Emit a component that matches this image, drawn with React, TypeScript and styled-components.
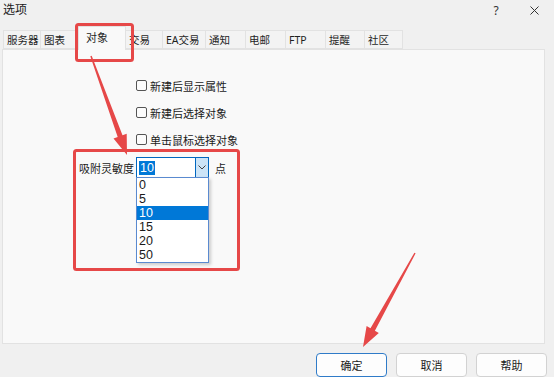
import React from "react";
import styled, { createGlobalStyle } from "styled-components";

const Global = createGlobalStyle`
  html, body { margin: 0; padding: 0; background: #f0f0f0; overflow: hidden; }
  * { box-sizing: border-box; }
`;

const FONT = `"Noto Sans", "Noto Sans CJK SC", sans-serif`;

const Window = styled.div`
  position: relative;
  width: 554px;
  height: 377px;
  background: #f0f0f0;
  font-family: ${FONT};
  color: #1a1a1a;
  display: flex;
  flex-direction: column;
`;

const TitleBar = styled.div`
  height: 20px;
  display: flex;
  align-items: center;
  padding-left: 3px;
  padding-right: 12px;
  font-size: 12px;
`;

const TitleText = styled.span`
  flex: 1;
  line-height: 16px;
`;

const TitleButton = styled.span<{ $w: number; $gap?: number }>`
  width: ${(p) => p.$w}px;
  margin-left: ${(p) => p.$gap ?? 0}px;
  display: flex;
  justify-content: center;
  align-items: center;
  font-size: 12px;
  color: #333;
`;

const TabRow = styled.div`
  height: 29px;
  display: flex;
  align-items: flex-end;
  padding-left: 3px;
  position: relative;
  z-index: 1;
`;

const Tab = styled.div<{ $w: number; $active?: boolean }>`
  width: ${(p) => p.$w}px;
  height: ${(p) => (p.$active ? 24 : 19)}px;
  margin-bottom: ${(p) => (p.$active ? -1 : 0)}px;
  display: flex;
  align-items: center;
  padding-left: ${(p) => (p.$active ? 7 : 3)}px;
  padding-bottom: ${(p) => (p.$active ? 3 : 0)}px;
  font-size: ${(p) => (p.$active ? 11 : 10.5)}px;
  white-space: nowrap;
  background: ${(p) => (p.$active ? "#f9f9f9" : "#f3f3f3")};
  border: 1px solid #e2e2e2;
  border-bottom: ${(p) => (p.$active ? "none" : "1px solid #e2e2e2")};
  margin-right: -1px;
  color: #1f1f1f;
`;

const Panel = styled.div`
  margin-left: 2px;
  width: 543px;
  height: 295px;
  background: #f9f9f9;
  border: 1px solid #e2e2e2;
  padding-top: 22px;
  display: flex;
  flex-direction: column;
`;

const CheckList = styled.div`
  margin-left: 133px;
  display: flex;
  flex-direction: column;
`;

const CheckRow = styled.label`
  height: 27px;
  display: flex;
  align-items: center;
  gap: 3px;
  font-size: 11px;
`;

const Box = styled.span`
  width: 11px;
  height: 11px;
  border: 1px solid #555;
  border-radius: 2px;
  background: #fcfcfc;
`;

const SensRow = styled.div`
  margin-top: 4px;
  margin-left: 76px;
  height: 21px;
  display: flex;
  align-items: center;
  font-size: 11px;
`;

const SensLabel = styled.span`
  width: 57px;
`;

const Combo = styled.div`
  position: relative;
  width: 73px;
  height: 21px;
  border: 1px solid #0067c0;
  background: #fff;
  display: flex;
`;

const ComboValue = styled.div`
  flex: 1;
  display: flex;
  align-items: center;
  padding-left: 2px;
`;

const Selected = styled.span`
  background: #0078d7;
  color: #fff;
  font-family: "Liberation Sans", Arial, sans-serif;
  font-size: 12.5px;
  line-height: 14px;
  padding: 0 1px;
`;

const DropButton = styled.div`
  width: 13px;
  background: #cce4f7;
  border-left: 1px solid #0067c0;
  display: flex;
  align-items: center;
  justify-content: center;
`;

const Unit = styled.span`
  margin-left: 6px;
`;

const List = styled.div`
  position: absolute;
  top: 100%;
  left: -1px;
  right: -1px;
  background: #fff;
  border: 1px solid #5a8ad0;
  box-shadow: 2px 2px 3px rgba(0, 0, 0, 0.18);
  z-index: 2;
`;

const Item = styled.div<{ $active?: boolean }>`
  height: 14px;
  line-height: 14px;
  font-family: "Liberation Sans", Arial, sans-serif;
  font-size: 12.5px;
  padding-left: 2px;
  overflow: hidden;
  background: ${(p) => (p.$active ? "#0078d7" : "transparent")};
  color: ${(p) => (p.$active ? "#fff" : "#1a1a1a")};
`;

const ButtonBar = styled.div`
  margin-top: 9px;
  display: flex;
  justify-content: flex-end;
  gap: 9px;
  padding-right: 7px;
`;

const Button = styled.button<{ $primary?: boolean }>`
  width: 71px;
  height: 24px;
  background: #fdfdfd;
  border: 1px solid ${(p) => (p.$primary ? "#2f7bc8" : "#d2d2d2")};
  border-radius: 4px;
  font-family: ${FONT};
  font-size: 11px;
  color: #1a1a1a;
  padding: 0;
`;

const Overlay = styled.svg`
  position: absolute;
  left: 0;
  top: 0;
  pointer-events: none;
  z-index: 5;
`;

const tabs: [string, number][] = [
  ["服务器", 38],
  ["图表", 39],
  ["对象", 48],
  ["交易", 38],
  ["EA交易", 44],
  ["通知", 41],
  ["电邮", 41],
  ["FTP", 41],
  ["提醒", 40],
  ["社区", 39],
];

const checks = ["新建后显示属性", "新建后选择对象", "单击鼠标选择对象"];
const options = ["0", "5", "10", "15", "20", "50"];

const RED = "#e64848";

export default function App() {
  return (
    <>
      <Global />
      <Window>
        <TitleBar>
          <TitleText>选项</TitleText>
          <TitleButton $w={14}>?</TitleButton>
          <TitleButton $w={16} $gap={23}>
            <svg width="9" height="9" viewBox="0 0 9 9">
              <path d="M0.5 0.5 L8.5 8.5 M8.5 0.5 L0.5 8.5" stroke="#333" strokeWidth="1" />
            </svg>
          </TitleButton>
        </TitleBar>
        <TabRow>
          {tabs.map(([t, w]) => (
            <Tab key={t} $w={w} $active={t === "对象"}>
              {t}
            </Tab>
          ))}
        </TabRow>
        <Panel>
          <CheckList>
            {checks.map((c) => (
              <CheckRow key={c}>
                <Box />
                {c}
              </CheckRow>
            ))}
          </CheckList>
          <SensRow>
            <SensLabel>吸附灵敏度</SensLabel>
            <Combo>
              <ComboValue>
                <Selected>10</Selected>
              </ComboValue>
              <DropButton>
                <svg width="8" height="5" viewBox="0 0 8 5">
                  <path d="M0.5 0.5 L4 4 L7.5 0.5" fill="none" stroke="#444" strokeWidth="1" />
                </svg>
              </DropButton>
              <List>
                {options.map((o) => (
                  <Item key={o} $active={o === "10"}>
                    {o}
                  </Item>
                ))}
              </List>
            </Combo>
            <Unit>点</Unit>
          </SensRow>
        </Panel>
        <ButtonBar>
          <Button $primary>确定</Button>
          <Button>取消</Button>
          <Button>帮助</Button>
        </ButtonBar>
        <Overlay width="554" height="377" viewBox="0 0 554 377">
          <rect x="76.5" y="24.5" width="56" height="36" rx="2" fill="none" stroke={RED} strokeWidth="3" />
          <rect x="74.5" y="150.5" width="164" height="119" rx="2" fill="none" stroke={RED} strokeWidth="3" />
          <polygon
            points="90.3,56.2 117.7,137 113.5,138.5 127,155 126.7,133.7 122.5,135.2 91.7,55.8"
            fill={RED}
          />
          <polygon
            points="415.6,253.3 374.9,330.7 378.8,332.9 363,347 366.6,326.1 370.5,328.3 414.4,252.7"
            fill={RED}
          />
        </Overlay>
      </Window>
    </>
  );
}
